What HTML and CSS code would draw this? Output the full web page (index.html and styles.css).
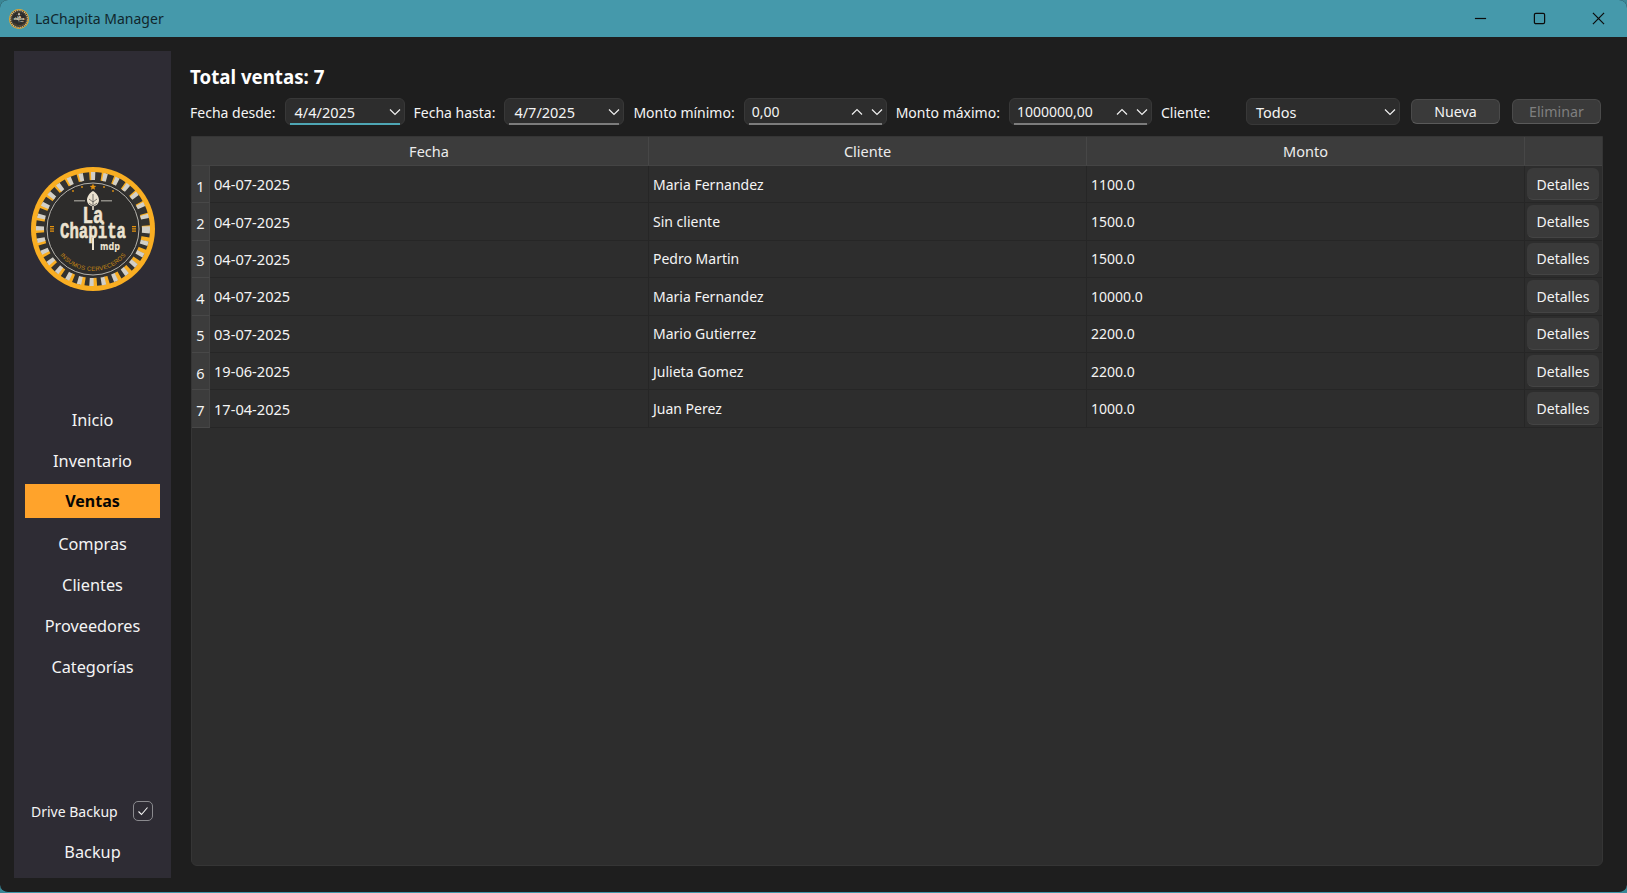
FILE: index.html
```html
<!DOCTYPE html>
<html lang="es">
<head>
<meta charset="utf-8">
<title>LaChapita Manager</title>
<link rel="stylesheet" href="styles.css">
</head>
<body>
<svg class="defs" width="0" height="0" aria-hidden="true">
  <defs>
    <path id="arc" d="M-33 26 A42 42 0 0 0 33 26"/>
    <symbol id="logo" viewBox="-62 -62 124 124">
      <circle r="62" fill="#f9ae22"/>
      <circle r="49" fill="#333230"/>
      <circle r="52.500" fill="none" stroke="#333230" stroke-width="9" stroke-dasharray="7.800 3.980"/>
      <circle r="53" fill="none" stroke="#d2cfc7" stroke-width="8" stroke-dasharray="4.200 7.580"/>
      <circle r="47.500" fill="#2d2c2b"/>
      <circle r="46" fill="none" stroke="#b5b3ad" stroke-width="1"/>
      <path d="M0-45.500l.9 2.300 2.400.1-1.900 1.500.7 2.300-2.100-1.300-2.100 1.300.7-2.300-1.900-1.500 2.400-.1z" fill="#e5930f"/>
      <g fill="#e5930f"><circle cx="-11" cy="-42" r=".9"/><circle cx="11" cy="-42" r=".9"/><circle cx="-20" cy="-38" r=".9"/><circle cx="20" cy="-38" r=".9"/></g>
      <path d="M-19-29h11v1.600h-11zM8-29h11v1.600H8z" fill="#8d8b85"/>
      <path d="M0-38c3.500 2 6 5.500 6 9 0 3.500-2.500 5.500-5.200 6.300v3.700H-.8v-3.700C-3.500-23.500-6-25.500-6-29c0-3.500 2.500-7 6-9z" fill="#ece3d0"/>
      <path d="M0-35v12M-4-30l4 3 4-3M-4-26l4 3 4-3" stroke="#2d2c2b" stroke-width=".6" fill="none"/>
      <text class="logo-la" x="0" y="-6" text-anchor="middle" textLength="21" lengthAdjust="spacingAndGlyphs">La</text>
      <text class="logo-ch" x="0" y="9" text-anchor="middle" textLength="66" lengthAdjust="spacingAndGlyphs">Chapita</text>
      <rect x="-1" y="9" width="2" height="12" fill="#ece3d0"/>
      <text class="logo-mdp" x="17" y="21" text-anchor="middle" textLength="20" lengthAdjust="spacingAndGlyphs">mdp</text>
      <path fill="#e5930f" d="M-43-3h4v1.200h-4zM-43-.7h4v1.200h-4zM-43 1.600h4v1.200h-4zM39-3h4v1.200h-4zM39-.7h4v1.200h-4zM39 1.600h4v1.200h-4z"/>
      <text class="logo-arc"><textPath href="#arc" startOffset="50%" text-anchor="middle">INSUMOS CERVECEROS</textPath></text>
    </symbol>
  </defs>
</svg>
<div class="window">
  <header class="titlebar">
    <svg class="app-icon" aria-hidden="true"><use href="#logo"/></svg>
    <span class="app-title">LaChapita Manager</span>
    <div class="win-controls">
      <svg class="win-btn" viewBox="0 0 14 14" aria-hidden="true"><path d="M1 7h12"/></svg>
      <svg class="win-btn" viewBox="0 0 14 14" aria-hidden="true"><rect x="1.500" y="1.500" width="11" height="11" rx="1.500"/></svg>
      <svg class="win-btn" viewBox="0 0 14 14" aria-hidden="true"><path d="M1 1l12 12M13 1L1 13"/></svg>
    </div>
  </header>
  <div class="body">
    <aside class="sidebar">
      <svg class="logo" aria-hidden="true"><use href="#logo"/></svg>
      <nav class="nav">
        <div class="nav-item">Inicio</div>
        <div class="nav-item">Inventario</div>
        <div class="nav-item active">Ventas</div>
        <div class="nav-item">Compras</div>
        <div class="nav-item">Clientes</div>
        <div class="nav-item">Proveedores</div>
        <div class="nav-item">Categorías</div>
      </nav>
      <div class="side-foot">
        <div class="drive">
          <span>Drive Backup</span>
          <span class="check"><svg viewBox="0 0 12 12" aria-hidden="true"><path d="M1.500 6.500l3 3 6-7"/></svg></span>
        </div>
        <div class="nav-item">Backup</div>
      </div>
    </aside>
    <main class="main">
      <h1 class="total">Total ventas: 7</h1>
      <div class="filters">
        <label class="lbl">Fecha desde:</label>
        <div class="field date focus"><span>4/4/2025</span><svg class="chev" viewBox="0 0 12 8" aria-hidden="true"><path d="M1 1.500l5 5 5-5"/></svg></div>
        <label class="lbl">Fecha hasta:</label>
        <div class="field date"><span>4/7/2025</span><svg class="chev" viewBox="0 0 12 8" aria-hidden="true"><path d="M1 1.500l5 5 5-5"/></svg></div>
        <label class="lbl">Monto mínimo:</label>
        <div class="field spin"><span class="val">0,00</span><svg class="chev" viewBox="0 0 12 8" aria-hidden="true"><path d="M1 6.500l5-5 5 5"/></svg><svg class="chev chev-gap" viewBox="0 0 12 8" aria-hidden="true"><path d="M1 1.500l5 5 5-5"/></svg></div>
        <label class="lbl">Monto máximo:</label>
        <div class="field spin"><span class="val">1000000,00</span><svg class="chev" viewBox="0 0 12 8" aria-hidden="true"><path d="M1 6.500l5-5 5 5"/></svg><svg class="chev chev-gap" viewBox="0 0 12 8" aria-hidden="true"><path d="M1 1.500l5 5 5-5"/></svg></div>
        <label class="lbl lbl-client">Cliente:</label>
        <div class="field combo"><span>Todos</span><svg class="chev" viewBox="0 0 12 8" aria-hidden="true"><path d="M1 1.500l5 5 5-5"/></svg></div>
        <button class="btn">Nueva</button>
        <button class="btn disabled">Eliminar</button>
      </div>
      <section class="table">
        <div class="row head">
          <div class="corner"></div><div class="th">Fecha</div><div class="th">Cliente</div><div class="th">Monto</div><div class="th"></div>
        </div>
        <div class="row"><div class="idx">1</div><div class="td">04-07-2025</div><div class="td">Maria Fernandez</div><div class="td">1100.0</div><div class="td act"><span class="det">Detalles</span></div></div>
        <div class="row"><div class="idx">2</div><div class="td">04-07-2025</div><div class="td">Sin cliente</div><div class="td">1500.0</div><div class="td act"><span class="det">Detalles</span></div></div>
        <div class="row"><div class="idx">3</div><div class="td">04-07-2025</div><div class="td">Pedro Martin</div><div class="td">1500.0</div><div class="td act"><span class="det">Detalles</span></div></div>
        <div class="row"><div class="idx">4</div><div class="td">04-07-2025</div><div class="td">Maria Fernandez</div><div class="td">10000.0</div><div class="td act"><span class="det">Detalles</span></div></div>
        <div class="row"><div class="idx">5</div><div class="td">03-07-2025</div><div class="td">Mario Gutierrez</div><div class="td">2200.0</div><div class="td act"><span class="det">Detalles</span></div></div>
        <div class="row"><div class="idx">6</div><div class="td">19-06-2025</div><div class="td">Julieta Gomez</div><div class="td">2200.0</div><div class="td act"><span class="det">Detalles</span></div></div>
        <div class="row"><div class="idx">7</div><div class="td">17-04-2025</div><div class="td">Juan Perez</div><div class="td">1000.0</div><div class="td act"><span class="det">Detalles</span></div></div>
      </section>
    </main>
  </div>
</div>
</body>
</html>
```
FILE: styles.css
```css
* { box-sizing: border-box; }
html, body { margin: 0; height: 100%; }
body {
  background: #3a8796;
  font-family: "Noto Sans", "Open Sans", sans-serif;
  color: #f4f4f4;
  font-size: 14px;
  overflow: hidden;
}
.defs { position: absolute; }
.window {
  width: 1627px;
  height: 893px;
  display: flex;
  flex-direction: column;
  background: #1e1e1e;
  border-radius: 8px;
  border-bottom: 1px solid #3f96a8;
  overflow: hidden;
}
.titlebar {
  height: 37px;
  flex: none;
  background: #4599ab;
  display: flex;
  align-items: center;
  padding-left: 9px;
  color: #10262c;
}
.app-icon { width: 20px; height: 20px; }
.app-title { margin-left: 6px; font-size: 14px; }
.win-controls { margin-left: auto; display: flex; align-items: center; gap: 46px; padding-right: 22px; }
.win-btn { width: 13px; height: 13px; fill: none; stroke: #0c0c0c; stroke-width: 1.300; display: block; }
.body { flex: 1; display: flex; padding: 14px 24px 14px 14px; gap: 20px; min-height: 0; }
.sidebar {
  width: 157px;
  flex: none;
  background: #2e2c34;
  display: flex;
  flex-direction: column;
  align-items: center;
  padding: 116px 11px 6px;
}
.logo { width: 124px; height: 124px; flex: none; }
.logo-la { font: 700 23px "Liberation Mono", monospace; fill: #ece3d0; stroke: #ece3d0; stroke-width: .6px; }
.logo-ch { font: 700 22px "Liberation Mono", monospace; fill: #ece3d0; stroke: #ece3d0; stroke-width: .6px; }
.logo-mdp { font: 700 10px "DejaVu Sans", sans-serif; fill: #ece3d0; }
.logo-arc { font: 400 6px "Liberation Sans", sans-serif; fill: #c98a12; letter-spacing: .2px; }
.nav { width: 100%; margin-top: 108px; display: flex; flex-direction: column; }
.nav-item {
  height: 41px;
  display: flex;
  align-items: center;
  justify-content: center;
  font-size: 16.300px;
  color: #f4f4f4;
  width: 100%;
}
.nav-item.active {
  height: 34px;
  margin: 3px 0 5px;
  background: #ffa32b;
  color: #050505;
  font-weight: 700;
  font-size: 16px;
}
.side-foot { margin-top: auto; width: 100%; display: flex; flex-direction: column; }
.drive { display: flex; align-items: center; justify-content: space-between; font-size: 14px; padding: 0 7px 0 6px; height: 30px; margin-bottom: 5px; }
.check { width: 20px; height: 20px; border: 1.500px solid #8a8a8e; border-radius: 5px; display: flex; align-items: center; justify-content: center; }
.check svg { width: 12px; height: 12px; fill: none; stroke: #f4f4f4; stroke-width: 1.100; }
.main { flex: 1; min-width: 0; display: flex; flex-direction: column; padding-bottom: 12px; }
.total { margin: 13px 0 0 -1px; font-size: 18.700px; line-height: 25px; height: 25px; font-weight: 700; color: #fff; }
.filters { display: flex; align-items: center; height: 27px; margin: 9px -2px 0 -1px; font-size: 14px; }
.lbl { white-space: nowrap; margin-right: 9px; margin-left: 9px; padding-top: 1px; }
.filters .lbl:first-child { margin-left: 0; }
.lbl-client { width: 76px; }
.field {
  height: 27px;
  flex: none;
  background: #2d2d2d;
  border: 1px solid #383838;
  border-radius: 6px;
  display: flex;
  align-items: center;
  padding: 0 3px 0 9px;
  position: relative;
  font-size: 14.500px;
}
.field.date::after, .field.spin::after {
  content: "";
  position: absolute;
  left: 4px;
  right: 4px;
  bottom: -1px;
  height: 2px;
  background: #7c7c7c;
}
.field.date.focus::after { background: #4ea6b4; }
.field span { flex: 1; }
.date { width: 120px; }
.spin { width: 143px; padding-left: 7px; font-size: 14px; }
.combo { width: 154px; }
.chev { width: 12px; height: 8px; fill: none; stroke: #f0f0f0; stroke-width: 1.200; flex: none; }
.chev-gap { margin-left: 8px; }
.btn {
  font: inherit;
  font-size: 14.200px;
  width: 89px;
  height: 25px;
  margin-left: 11px;
  flex: none;
  background: #3a3a3a;
  color: #f4f4f4;
  border: 1px solid #4a4a4a;
  border-bottom-color: #5a5a5a;
  border-radius: 6px;
  padding: 0;
}
.btn.disabled { margin-left: 12px; color: #7f7f7f; }
.table {
  flex: 1;
  margin-top: 11px;
  background: #2d2d2d;
  border: 1px solid #353535;
  border-radius: 0 0 6px 6px;
  min-height: 0;
}
.row {
  display: grid;
  grid-template-columns: 18px 438px 438px 438px 1fr;
  height: 37.400px;
  font-size: 14px;
}
.row.head { height: 29px; background: #3c3c3c; border-bottom: 1px solid #444; font-size: 14.500px; }
.th { display: flex; align-items: center; justify-content: center; border-left: 1px solid #474747; color: #ececec; }
.corner + .th { border-left: 0; }
.idx {
  background: #3c3c3c;
  border-bottom: 1px solid #484848;
  border-right: 1px solid #444;
  display: flex;
  align-items: center;
  justify-content: center;
  padding-top: 3px;
  font-size: 14.500px;
}
.td {
  display: flex;
  align-items: center;
  padding: 0 4px;
  border-bottom: 1px solid #262626;
  border-left: 1px solid #262626;
}
.idx + .td { border-left: 0; font-size: 14.600px; }
.td.act { padding: 2px 3px 2px 2px; justify-content: center; }
.det {
  flex: 1;
  height: 100%;
  display: flex;
  align-items: center;
  justify-content: center;
  padding-top: 1px;
  background: #3a3a3a;
  border-radius: 6px;
  border-bottom: 1px solid #444;
}
```
